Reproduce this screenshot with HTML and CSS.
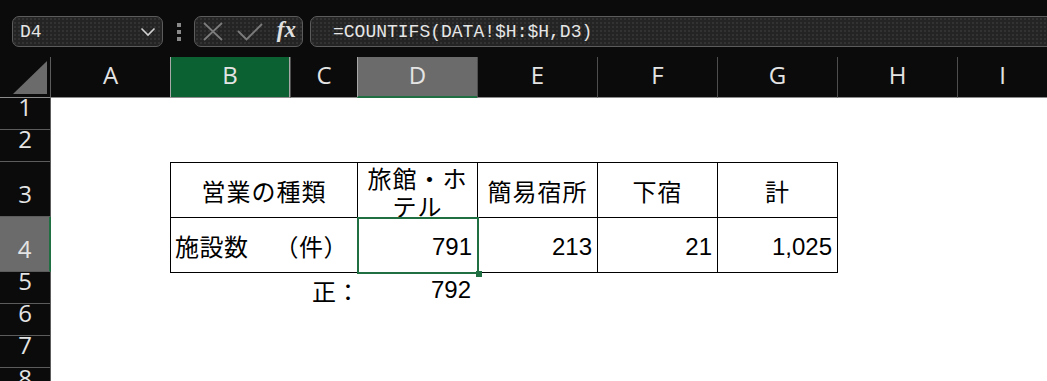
FILE: index.html
```html
<!DOCTYPE html>
<html lang="ja">
<head>
    <meta charset="UTF-8">
    <meta name="viewport" content="width=device-width, initial-scale=1.0">
    <title>施設数</title>
    <link rel="stylesheet" href="styles.css">
</head>
<body>
    <div class="toolbar">
        <div class="namebox box">
            <span>D4</span>
            <svg class="chevron" width="16" height="10" viewBox="0 0 16 10">
                <polyline points="1.5,1.5 8,8 14.5,1.5" fill="none" stroke="#d0d0d0" stroke-width="1.6"/>
            </svg>
        </div>
        <div class="grip">
            <i></i><i></i><i></i>
        </div>
        <div class="fxbox box">
            <svg width="20" height="19" viewBox="0 0 20 19">
                <path d="M1 1 L19 18 M19 1 L1 18" stroke="#7c7c7c" stroke-width="1.8" fill="none"/>
            </svg>
            <svg width="26" height="18" viewBox="0 0 26 18">
                <polyline points="1,8 9.5,16.5 25,1" stroke="#7c7c7c" stroke-width="1.8" fill="none"/>
            </svg>
            <span class="fx">fx</span>
        </div>
        <div class="formula box">=COUNTIFS(DATA!$H:$H,D3)</div>
    </div>

    <div class="sheet">
        <!-- 列見出し -->
        <div class="corner">
            <svg width="50" height="41" viewBox="0 0 50 41">
                <polygon points="13,37 47,37 47,4" fill="#6b6b6b"/>
            </svg>
        </div>
        <div class="colhead first">A</div>
        <div class="colhead active">B</div>
        <div class="colhead">C</div>
        <div class="colhead current">D</div>
        <div class="colhead">E</div>
        <div class="colhead">F</div>
        <div class="colhead">G</div>
        <div class="colhead">H</div>
        <div class="colhead">I</div>

        <!-- 行見出し -->
        <div class="rowhead r1">1</div>
        <div class="rowhead r2">2</div>
        <div class="rowhead r3">3</div>
        <div class="rowhead r4 current">4</div>
        <div class="rowhead r5">5</div>
        <div class="rowhead r6">6</div>
        <div class="rowhead r7">7</div>
        <div class="rowhead r8">8</div>

        <!-- 表 -->
        <div class="table">
            <div class="cell center">営業の種類</div>
            <div class="cell center wrap"><span>旅館・ホテル</span></div>
            <div class="cell center">簡易宿所</div>
            <div class="cell center">下宿</div>
            <div class="cell center">計</div>

            <div class="cell label"><span>施設数</span><span>（件）</span></div>
            <div class="cell num sel">791</div>
            <div class="cell num">213</div>
            <div class="cell num">21</div>
            <div class="cell num">1,025</div>
        </div>

        <div class="note">正：</div>
        <div class="note-num">792</div>
    </div>
</body>
</html>
```

FILE: styles.css
```css
body {
    margin: 0;
    width: 1047px;
    height: 381px;
    overflow: hidden;
    background-color: #0b0b0b;
    font-family: "Liberation Sans", "Noto Sans CJK JP", sans-serif;
}

/* ツールバー */
.toolbar {
    height: 57px;
    box-sizing: border-box;
    padding: 16px 0 0 12px;
    display: flex;
    align-items: flex-start;
    overflow: hidden;
}

.toolbar > div {
    flex-shrink: 0;
}

.box {
    height: 31px;
    box-sizing: border-box;
    border: 1px solid #5c5c5c;
    border-radius: 7px;
    background-color: #242424;
    background-image: radial-gradient(rgba(255, 255, 255, 0.07) 0.7px, transparent 1px);
    background-size: 4px 4px;
    display: flex;
    align-items: center;
    color: #e6e6e6;
    font-family: "Liberation Mono", monospace;
    font-size: 18px;
}

.namebox {
    width: 151px;
    padding: 0 6px 0 7px;
    justify-content: space-between;
}

.grip {
    width: 31px;
    height: 31px;
    display: flex;
    flex-direction: column;
    align-items: center;
    justify-content: center;
    gap: 3px;
}

.grip i {
    display: block;
    width: 4px;
    height: 4px;
    background-color: #8a8a8a;
}

.fxbox {
    width: 109px;
    padding: 0 6px 0 8px;
    justify-content: space-between;
}

.fx {
    font-family: "Liberation Serif", serif;
    font-style: italic;
    font-weight: bold;
    font-size: 23px;
    color: #e0e0e0;
    margin-top: -3px;
}

.formula {
    margin-left: 7px;
    width: 800px;
    padding-left: 22px;
    border-radius: 7px 0 0 7px;
}

/* シート */
.sheet {
    display: grid;
    grid-template-columns: 51px 119px 120px 67px 120px 120px 120px 120px 120px 90px;
    grid-template-rows: 41px 32px 32px 55px 55px 32px 32px 32px 32px;
    background-color: #ffffff;
}

.corner {
    background-color: #0b0b0b;
    border-right: 1px solid #5c5c5c;
    border-bottom: 1px solid #8c8c8c;
}

.corner svg {
    display: block;
}

.colhead,
.rowhead {
    background-color: #0b0b0b;
    color: #e4e4e4;
    font-family: "Open Sans", sans-serif;
    font-size: 24px;
    display: flex;
    justify-content: center;
    align-items: flex-end;
    line-height: 1;
    box-sizing: border-box;
}

.colhead {
    border-left: 1px solid #4e4e4e;
    border-bottom: 1px solid #8c8c8c;
    padding-bottom: 10px;
}

.colhead.first {
    border-left: none;
}

.colhead.active {
    background-color: #0c6133;
    border-left: 1px solid #a8a8a8;
    border-right: 1px solid #a8a8a8;
}

.colhead.current {
    background-color: #6b6b6b;
    border-left: 1px solid #a8a8a8;
    border-bottom: 2px solid #1f6f43;
    padding-bottom: 9px;
}

.rowhead {
    grid-column: 1;
    border-right: 1px solid #5c5c5c;
    border-bottom: 1px solid #5c5c5c;
    padding-bottom: 10px;
}

.rowhead.current {
    background-color: #6b6b6b;
    border-right: 2px solid #1f6f43;
}

.r8 {
    border-bottom: none;
}

/* 表 */
.table {
    grid-column: 3 / 9;
    grid-row: 4 / 6;
    width: 668px;
    height: 111px;
    box-sizing: border-box;
    padding: 1px;
    display: grid;
    grid-template-columns: 186px 119px 119px 119px 119px;
    grid-template-rows: 54px 54px;
    gap: 1px;
    background-color: #000000;
    position: relative;
    z-index: 1;
}

.cell {
    background-color: #ffffff;
    color: #000000;
    font-size: 24px;
    display: flex;
    align-items: center;
    box-sizing: border-box;
}

.center {
    justify-content: center;
    letter-spacing: 1px;
}

.wrap {
    overflow: hidden;
    text-align: center;
    line-height: 28px;
    padding: 0 4px;
    align-items: flex-start;
}

.wrap span {
    display: block;
    width: 106px;
    margin-top: 3px;
}

.label {
    justify-content: space-between;
    padding: 0 9px 0 4px;
    letter-spacing: 0.5px;
}

.num {
    justify-content: flex-end;
    padding-right: 5px;
    padding-top: 3px;
}

.sel {
    position: relative;
}

.sel::after {
    content: "";
    position: absolute;
    top: -1px;
    left: -1px;
    right: -2px;
    bottom: -2px;
    border: 2px solid #1f6f43;
}

.sel::before {
    content: "";
    position: absolute;
    right: -5px;
    bottom: -5px;
    width: 6px;
    height: 6px;
    background-color: #1f6f43;
    z-index: 2;
}

.note,
.note-num {
    grid-row: 6;
    font-size: 24px;
    color: #000000;
    display: flex;
    justify-content: flex-end;
    align-items: center;
    padding-top: 4px;
}

.note {
    grid-column: 4;
    margin-right: -3px;
}

.note-num {
    grid-column: 5;
    padding-right: 6px;
}
```
